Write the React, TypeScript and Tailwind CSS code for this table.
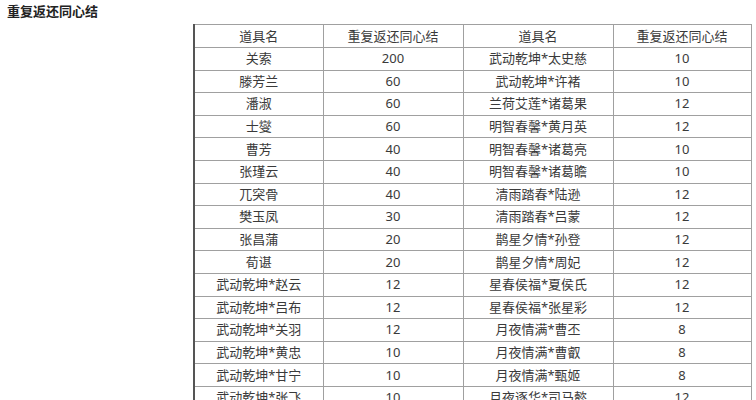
const rows: [string, string, string, string][] = [
  ['关索', '200', '武动乾坤*太史慈', '10'],
  ['滕芳兰', '60', '武动乾坤*许褚', '10'],
  ['潘淑', '60', '兰荷艾莲*诸葛果', '12'],
  ['士燮', '60', '明智春馨*黄月英', '12'],
  ['曹芳', '40', '明智春馨*诸葛亮', '10'],
  ['张瑾云', '40', '明智春馨*诸葛瞻', '10'],
  ['兀突骨', '40', '清雨踏春*陆逊', '12'],
  ['樊玉凤', '30', '清雨踏春*吕蒙', '12'],
  ['张昌蒲', '20', '鹊星夕情*孙登', '12'],
  ['荀谌', '20', '鹊星夕情*周妃', '12'],
  ['武动乾坤*赵云', '12', '星春侯福*夏侯氏', '12'],
  ['武动乾坤*吕布', '12', '星春侯福*张星彩', '12'],
  ['武动乾坤*关羽', '12', '月夜情满*曹丕', '8'],
  ['武动乾坤*黄忠', '10', '月夜情满*曹叡', '8'],
  ['武动乾坤*甘宁', '10', '月夜情满*甄姬', '8'],
  ['武动乾坤*张飞', '10', '月夜逐华*司马懿', '12'],
];

const cell = 'border border-[#a0a0a0] text-center align-middle p-0 h-[22.6px] leading-none';

export default function App() {
  return (
    <div
      className="w-[756px] h-[400px] overflow-hidden bg-white text-[#3a3a3a] text-[13px]"
      style={{ fontFamily: '"Noto Sans", "Noto Sans CJK SC", sans-serif' }}
    >
      <h1 className="pl-[7px] pt-[3px] h-[24px] font-bold text-[13px] text-[#222] leading-[16px]">重复返还同心结</h1>
      <table className="ml-[193px] w-[557px] border-collapse table-fixed">
        <colgroup>
          <col className="w-[129px]" />
          <col className="w-[140px]" />
          <col className="w-[150px]" />
          <col className="w-[138px]" />
        </colgroup>
        <thead>
          <tr>
            <th className={`${cell} font-normal h-[23px] border-l-2 border-l-[#555]`}>道具名</th>
            <th className={`${cell} font-normal h-[23px]`}>重复返还同心结</th>
            <th className={`${cell} font-normal h-[23px]`}>道具名</th>
            <th className={`${cell} font-normal h-[23px]`}>重复返还同心结</th>
          </tr>
        </thead>
        <tbody>
          {rows.map((r, i) => (
            <tr key={i}>
              <td className={`${cell} border-l-2 border-l-[#555]`}>{r[0]}</td>
              <td className={cell}>{r[1]}</td>
              <td className={cell}>{r[2]}</td>
              <td className={cell}>{r[3]}</td>
            </tr>
          ))}
        </tbody>
      </table>
    </div>
  );
}
